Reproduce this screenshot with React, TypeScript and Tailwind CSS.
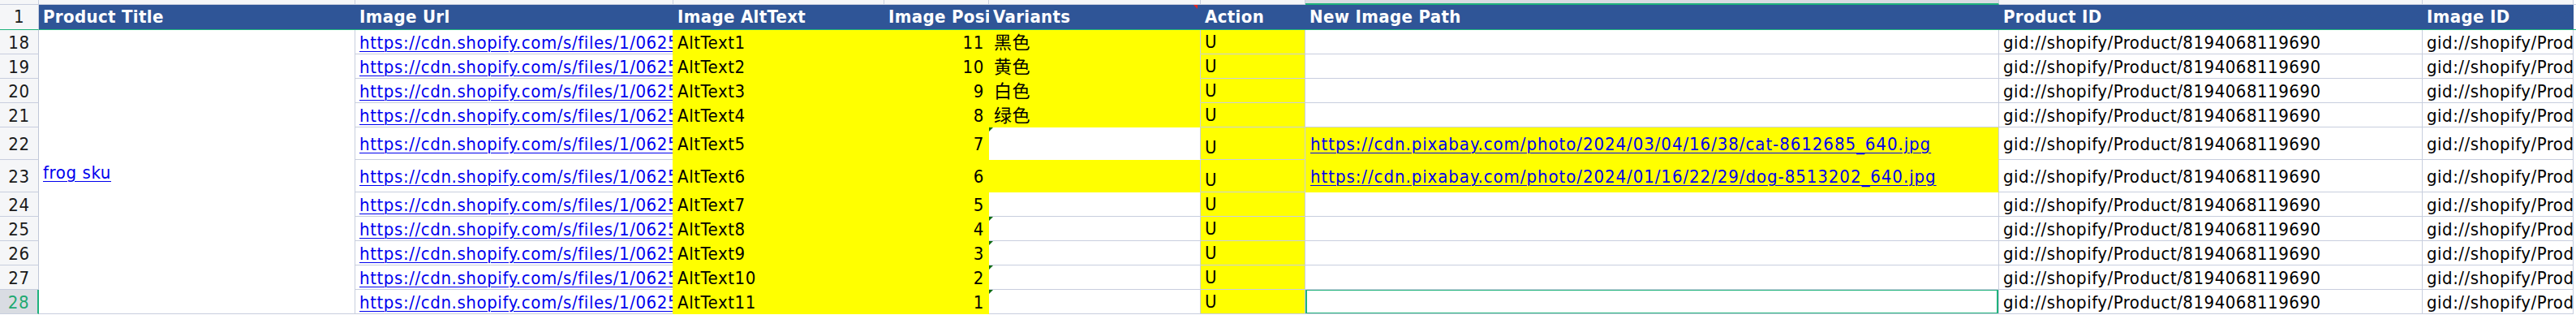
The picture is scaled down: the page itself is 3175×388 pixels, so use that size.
import React from 'react';

type Row = {
  n: number;
  alt: string;
  pos: number;
  v: string;
  vy: boolean;
  np?: string;
  tri?: boolean;
  sel?: boolean;
};

const rows: Row[] = [
  { n: 18, alt: 'AltText1', pos: 11, v: '黑色', vy: true },
  { n: 19, alt: 'AltText2', pos: 10, v: '黄色', vy: true },
  { n: 20, alt: 'AltText3', pos: 9, v: '白色', vy: true },
  { n: 21, alt: 'AltText4', pos: 8, v: '绿色', vy: true },
  { n: 22, alt: 'AltText5', pos: 7, v: '', vy: false, np: 'https://cdn.pixabay.com/photo/2024/03/04/16/38/cat-8612685_640.jpg', tri: true },
  { n: 23, alt: 'AltText6', pos: 6, v: '', vy: true, np: 'https://cdn.pixabay.com/photo/2024/01/16/22/29/dog-8513202_640.jpg' },
  { n: 24, alt: 'AltText7', pos: 5, v: '', vy: false },
  { n: 25, alt: 'AltText8', pos: 4, v: '', vy: false, tri: true },
  { n: 26, alt: 'AltText9', pos: 3, v: '', vy: false, tri: true },
  { n: 27, alt: 'AltText10', pos: 2, v: '', vy: false, tri: true },
  { n: 28, alt: 'AltText11', pos: 1, v: '', vy: false, tri: true, sel: true },
];

const headers = [
  'Product Title',
  'Image Url',
  'Image AltText',
  'Image Position',
  'Variants',
  'Action',
  'New Image Path',
  'Product ID',
  'Image ID',
];

const cell = 'relative flex overflow-hidden whitespace-nowrap px-[5px] border-r border-b tracking-[0.6px]';
const linkCls = 'text-[#0000ee] underline decoration-1 underline-offset-[3px]';

function Triangle() {
  return (
    <div className="absolute left-0 top-0 h-0 w-0 border-t-[5px] border-r-[5px] border-t-[#0b6b12] border-r-transparent" />
  );
}

export default function App() {
  return (
    <div className="h-[388px] w-[3175px] overflow-hidden bg-white font-['DejaVu_Sans_Condensed','DejaVu_Sans','Noto_Sans_CJK_SC',sans-serif] font-stretch-condensed text-[22px] leading-none tracking-[0.35px] text-black">
      <div className="grid grid-cols-[48px_390px_392px_260px_129px_261px_129px_855px_522px_186px_1fr] grid-rows-[6px_31px_repeat(4,30px)_40px_40px_repeat(5,30px)]">
        {/* column letter strip */}
        <div className="border-r border-b border-[#c8cede] bg-[#f5f6f8]" />
        {headers.map((h, i) => (
          <div
            key={'s' + i}
            className={
              i === 6
                ? 'border-r border-b-2 border-r-[#c8cede] border-b-[#1fb27c] bg-[#d9dce2]'
                : 'border-r border-b border-[#c8cede] bg-[#f5f6f8]'
            }
          />
        ))}
        <div className="border-b border-[#c8cede] bg-white" />

        {/* header row */}
        <div className="flex items-center justify-center border-r border-b border-r-[#c8cede] border-b-[#1fb27c] bg-[#f5f6f8] text-[#1a1a1a]">
          1
        </div>
        {headers.map((h, i) => (
          <div
            key={'h' + i}
            className="relative flex items-center overflow-hidden whitespace-nowrap border-b border-b-[#1fb27c] bg-[#2f5597] px-[5px] font-bold text-white"
          >
            {h}
            {i === 4 && (
              <div className="absolute right-[4px] top-0 h-0 w-0 border-t-[5px] border-l-[5px] border-t-[#e8231c] border-l-transparent" />
            )}
          </div>
        ))}
        <div className="border-b border-b-[#1fb27c] bg-white" />

        {/* data rows */}
        {rows.map((r, idx) => (
          <React.Fragment key={r.n}>
            <div
              className={
                r.sel
                  ? 'flex items-center justify-center border-r-2 border-b border-r-[#1fb27c] border-b-[#c8cede] bg-[#d9dce2] pt-[3px] tracking-[0.6px] text-[#1fa971]'
                  : 'flex items-center justify-center border-r border-b border-r-[#c0c7d8] border-b-[#c8cede] bg-[#f5f6f8] pt-[3px] tracking-[0.6px] text-[#1a1a1a]'
              }
            >
              {r.n}
            </div>
            {idx === 0 && (
              <div className="row-span-11 flex items-center border-r border-b border-[#c8cede] bg-white px-[5px] pt-[3px] tracking-[0.6px]">
                <span className={linkCls}>frog sku</span>
              </div>
            )}
            <div className={`${cell} items-center pt-[3px] border-r-[#ffff00] border-b-[#c8cede] bg-white`}>
              <span className={linkCls}>https://cdn.shopify.com/s/files/1/0625/8867/8570/files/frog.jpg?v=1705996211</span>
            </div>
            <div className={`${cell} items-center pt-[3px] border-[#ffff00] bg-[#ffff00]`}>{r.alt}</div>
            <div className={`${cell} items-center justify-end pt-[3px] border-[#ffff00] bg-[#ffff00]`}>{r.pos}</div>
            {r.vy ? (
              <div className={`${cell} items-center pl-[6px] pt-[3px] border-r-[#c8cede] border-b-[#ffff00] bg-[#ffff00]`}>{r.v}</div>
            ) : (
              <div
                className={`${cell} items-center pt-[3px] border-r-[#c8cede] ${r.n === 22 ? 'border-b-white' : 'border-b-[#c8cede]'} bg-white`}
              >
                {r.tri && <Triangle />}
              </div>
            )}
            <div className={`${cell} items-end pb-[3px] border-[#c8cede] bg-[#ffff00]`}>U</div>
            {r.np ? (
              <div className={`${cell} items-center pl-[6px] pt-[3px] border-r-[#c8cede] border-b-[#ffff00] bg-[#ffff00]`}>
                <span className={`${linkCls} tracking-[0.95px]`}>{r.np}</span>
              </div>
            ) : (
              <div className={`${cell} items-center pt-[3px] border-[#c8cede] bg-white`}>
                {r.sel && (
                  <div className="absolute inset-x-0 -top-px bottom-[-1px] border-2 border-[#1fb27c]" />
                )}
              </div>
            )}
            <div className={`${cell} items-center pt-[3px] border-[#c8cede] bg-white`}>
              <span className="tracking-[0.5px]">gid://shopify/Product/8194068119690</span>
            </div>
            <div className={`${cell} items-center pt-[3px] border-[#c8cede] bg-white`}>
              <span className="tracking-[0.5px]">gid://shopify/ProductImage/40173258440930</span>
            </div>
            <div className="bg-white" />
          </React.Fragment>
        ))}
      </div>
    </div>
  );
}
